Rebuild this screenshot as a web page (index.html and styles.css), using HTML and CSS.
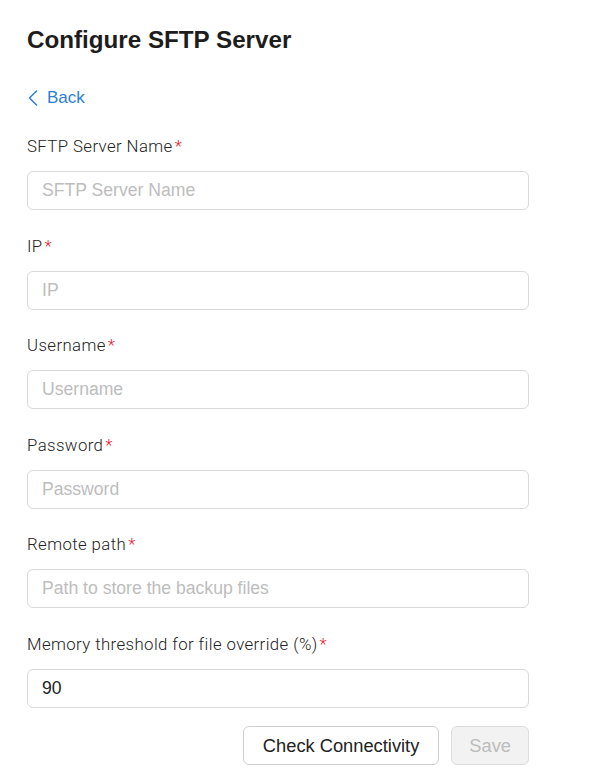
FILE: index.html
```html
<!DOCTYPE html>
<html lang="en">
<head>
<meta charset="utf-8">
<title>Configure SFTP Server</title>
<link rel="stylesheet" href="styles.css">
</head>
<body>
<div class="panel">
  <h1 class="title">Configure SFTP Server</h1>
  <a class="back" href="#">
    <svg class="chev" width="10" height="16" viewBox="0 0 10 16" aria-hidden="true"><path d="M8.5 1 L1.5 8 L8.5 15" fill="none" stroke="#2b7fd3" stroke-width="1.5" stroke-linecap="round" stroke-linejoin="round"/></svg>
    <span>Back</span>
  </a>
  <form class="form">
    <div class="field">
      <label class="label">SFTP Server Name<span class="req">*</span></label>
      <input class="input" type="text" placeholder="SFTP Server Name">
    </div>
    <div class="field">
      <label class="label">IP<span class="req">*</span></label>
      <input class="input" type="text" placeholder="IP">
    </div>
    <div class="field">
      <label class="label">Username<span class="req">*</span></label>
      <input class="input" type="text" placeholder="Username">
    </div>
    <div class="field">
      <label class="label">Password<span class="req">*</span></label>
      <input class="input" type="text" placeholder="Password">
    </div>
    <div class="field">
      <label class="label">Remote path<span class="req">*</span></label>
      <input class="input" type="text" placeholder="Path to store the backup files">
    </div>
    <div class="field last">
      <label class="label">Memory threshold for file override (%)<span class="req">*</span></label>
      <input class="input" type="text" value="90">
    </div>
    <div class="actions">
      <button type="button" class="btn">Check Connectivity</button>
      <button type="button" class="btn disabled" disabled>Save</button>
    </div>
  </form>
</div>
</body>
</html>
```
FILE: styles.css
```css
* { box-sizing: border-box; }
html, body { margin: 0; padding: 0; background: #fff; }
body { font-family: "Liberation Sans", Arial, sans-serif; color: #222; }

.panel {
  width: 502px;
  margin-left: 27px;
  padding-top: 26px;
}

.title {
  margin: 0;
  font-size: 24.2px;
  line-height: 28px;
  font-weight: 700;
  color: #1d1d1d;
}

.back {
  margin-top: 34px;
  display: flex;
  align-items: center;
  gap: 9px;
  height: 20px;
  font-size: 17px;
  line-height: 20px;
  color: #2b7fd3;
  text-decoration: none;
}
.chev { margin-left: 1px; }

.form { margin-top: 27px; }

.field {
  display: flex;
  flex-direction: column;
  margin-bottom: 24.5px;
}
.field.last { margin-bottom: 18.5px; }

.label {
  font-family: Roboto, "Liberation Sans", sans-serif;
  font-weight: 300;
  font-size: 16.8px;
  letter-spacing: 0.4px;
  line-height: 20px;
  padding-top: 1px;
  color: #222;
  margin-bottom: 15px;
}
.req { color: #e4222d; margin-left: 2px; }

.input {
  height: 39px;
  width: 100%;
  border: 1px solid #d9d9d9;
  border-radius: 6px;
  padding: 0 14px;
  font-family: "Liberation Sans", Arial, sans-serif;
  font-size: 17.6px;
  color: #222;
  background: #fff;
  outline: none;
}
.input::placeholder { color: #bdbdbd; opacity: 1; }

.actions {
  display: flex;
  justify-content: flex-end;
  gap: 12px;
}
.btn {
  height: 39px;
  padding: 0 19px;
  border: 1px solid #cfcfcf;
  border-radius: 6px;
  background: #fff;
  font-family: "Liberation Sans", Arial, sans-serif;
  font-size: 18.3px;
  color: #222;
}
.btn.disabled {
  padding: 0 17px;
  background: #f2f2f2;
  border-color: #dcdcdc;
  color: #bcbcbc;
}
```
